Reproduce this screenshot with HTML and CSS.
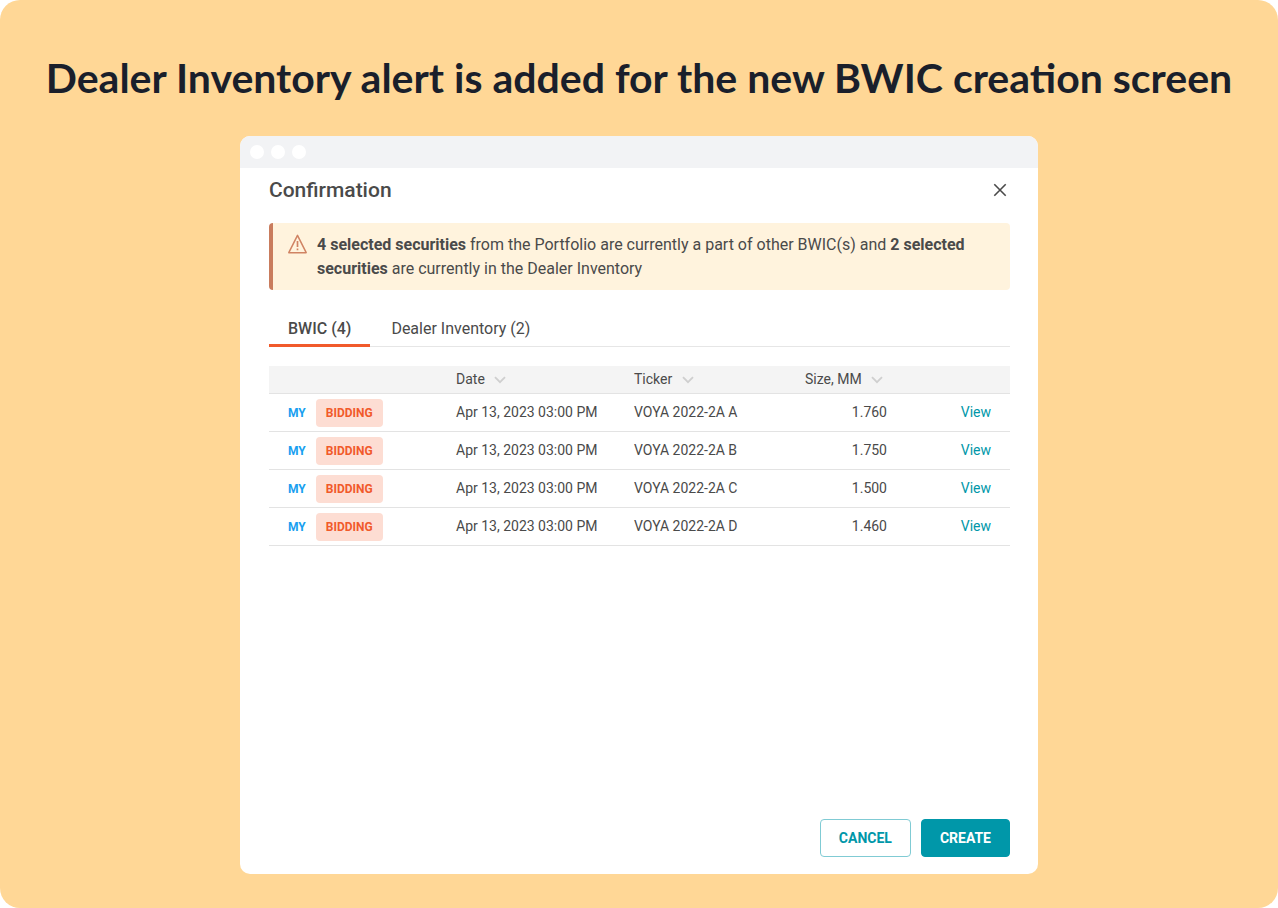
FILE: index.html
```html
<!DOCTYPE html>
<html lang="en">
  <head>
    <meta charset="UTF-8" />
    <meta name="viewport" content="width=device-width, initial-scale=1.0" />
    <title>Confirmation</title>
    <link rel="stylesheet" href="styles.css">
  </head>
  <body>
    <main class="page">
      <h1 class="page-title">Dealer Inventory alert is added for the new BWIC creation screen</h1>

      <section class="window">
        <div class="window-bar">
          <span class="dot"></span>
          <span class="dot"></span>
          <span class="dot"></span>
        </div>

        <div class="dialog">
          <header class="dialog-header">
            <h2>Confirmation</h2>
            <button class="close" aria-label="Close">
              <svg width="14" height="14" viewBox="0 0 14 14" fill="none" stroke="#4a4a4a" stroke-width="1.6">
                <path d="M1.3 1.3L12.7 12.7M12.7 1.3L1.3 12.7" />
              </svg>
            </button>
          </header>

          <div class="alert">
            <svg class="alert-icon" width="20" height="20" viewBox="0 0 20 20" fill="none" stroke="#d08363" stroke-width="1.5">
              <path d="M9.5 1.3L18.2 18.7H0.8L9.5 1.3Z" stroke-linejoin="round" />
              <path d="M9.5 7v6M9.5 14.4v1.8" stroke-width="1.7" />
            </svg>
            <p><b>4 selected securities</b> from the Portfolio are currently a part of other BWIC(s) and <b>2 selected securities</b> are currently in the Dealer Inventory</p>
          </div>

          <div class="tabs" role="tablist">
            <button class="tab active" role="tab" aria-selected="true">BWIC (4)</button>
            <button class="tab" role="tab" aria-selected="false">Dealer Inventory (2)</button>
          </div>

          <table class="securities">
            <colgroup>
              <col class="col-status">
              <col class="col-date">
              <col class="col-ticker">
              <col class="col-size">
              <col class="col-link">
            </colgroup>
            <thead>
              <tr>
                <th></th>
                <th>Date <svg class="sort" width="12" height="8" viewBox="0 0 12 8"><path d="M1 1.2L6 6.2L11 1.2" /></svg></th>
                <th>Ticker <svg class="sort" width="12" height="8" viewBox="0 0 12 8"><path d="M1 1.2L6 6.2L11 1.2" /></svg></th>
                <th>Size, MM <svg class="sort" width="12" height="8" viewBox="0 0 12 8"><path d="M1 1.2L6 6.2L11 1.2" /></svg></th>
                <th></th>
              </tr>
            </thead>
            <tbody>
              <tr>
                <td class="status-cell"><div class="status"><span class="my">MY</span><span class="badge">BIDDING</span></div></td>
                <td>Apr 13, 2023 03:00 PM</td>
                <td>VOYA 2022-2A A</td>
                <td class="right">1.760</td>
                <td class="right"><a href="#">View</a></td>
              </tr>
              <tr>
                <td class="status-cell"><div class="status"><span class="my">MY</span><span class="badge">BIDDING</span></div></td>
                <td>Apr 13, 2023 03:00 PM</td>
                <td>VOYA 2022-2A B</td>
                <td class="right">1.750</td>
                <td class="right"><a href="#">View</a></td>
              </tr>
              <tr>
                <td class="status-cell"><div class="status"><span class="my">MY</span><span class="badge">BIDDING</span></div></td>
                <td>Apr 13, 2023 03:00 PM</td>
                <td>VOYA 2022-2A C</td>
                <td class="right">1.500</td>
                <td class="right"><a href="#">View</a></td>
              </tr>
              <tr>
                <td class="status-cell"><div class="status"><span class="my">MY</span><span class="badge">BIDDING</span></div></td>
                <td>Apr 13, 2023 03:00 PM</td>
                <td>VOYA 2022-2A D</td>
                <td class="right">1.460</td>
                <td class="right"><a href="#">View</a></td>
              </tr>
            </tbody>
          </table>

          <footer class="actions">
            <button class="btn">CANCEL</button>
            <button class="btn btn-primary">CREATE</button>
          </footer>
        </div>
      </section>
    </main>
  </body>
</html>
```
FILE: styles.css
```css
* {
  box-sizing: border-box;
}
body {
  margin: 0;
  background: #fff;
  color: #4a4a4a;
  font-family: Roboto, sans-serif;
  font-size: 14px;
}
h1,
h2,
p {
  margin: 0;
}
button {
  font-family: inherit;
  color: inherit;
  border: none;
  background: none;
  cursor: pointer;
}

.page {
  min-height: 100vh;
  display: flex;
  flex-direction: column;
  align-items: center;
  padding: 48px 16px 34px;
  background: #ffd796;
  border-radius: 20px;
}
.page-title {
  margin-bottom: 28px;
  font-family: Lato, sans-serif;
  font-size: 41px;
  font-weight: 700;
  line-height: 60px;
  color: #1a1f2b;
  text-align: center;
}

.window {
  flex: 1;
  display: flex;
  flex-direction: column;
  width: 100%;
  max-width: 798px;
  background: #fff;
  border-radius: 10px;
  overflow: hidden;
}
.window-bar {
  display: flex;
  align-items: center;
  gap: 7px;
  height: 32px;
  padding: 0 10px;
  background: #f2f3f5;
}
.dot {
  width: 14px;
  height: 14px;
  border-radius: 50%;
  background: #fff;
}

.dialog {
  flex: 1;
  display: flex;
  flex-direction: column;
  padding: 8px 28px 17px 29px;
}
.dialog-header {
  display: flex;
  justify-content: space-between;
  align-items: center;
  height: 28px;
  margin-bottom: 19px;
}
.dialog-header h2 {
  font-size: 21px;
  font-weight: 500;
}
.close {
  display: flex;
  padding: 3px;
}

.alert {
  display: flex;
  gap: 9px;
  padding: 10px 19px 9px 15px;
  background: #fff3dd;
  border-left: 4px solid #c97c5d;
  border-radius: 4px;
  font-size: 16px;
  line-height: 24px;
}
.alert b {
  font-weight: 700;
}
.alert-icon {
  flex: none;
  margin-top: 1px;
}

.tabs {
  display: flex;
  gap: 2px;
  margin: 19px 0;
  border-bottom: 1px solid #e6e6e6;
}
.tab {
  height: 38px;
  margin-bottom: -1px;
  padding: 3px 19px 0;
  border-bottom: 3px solid transparent;
  font-size: 16px;
}
.tab.active {
  border-bottom-color: #f15a2b;
  font-weight: 500;
}

.securities {
  width: 100%;
  table-layout: fixed;
  border-collapse: separate;
  border-spacing: 0;
}
.col-status {
  width: 168px;
}
.col-date {
  width: 178px;
}
.col-ticker {
  width: 171px;
}
.col-size {
  width: 120px;
}
.securities th,
.securities td {
  padding: 0 19px 2px;
  border-bottom: 1px solid #e3e3e3;
  text-align: left;
  white-space: nowrap;
}
.securities th {
  height: 28px;
  background: #f4f4f4;
  font-weight: 400;
}
.securities td {
  height: 38px;
}
.securities .status-cell {
  padding-bottom: 0;
}
.securities .right {
  text-align: right;
}
.securities a {
  color: #0097a9;
  text-decoration: none;
}
.sort {
  margin-left: 6px;
  vertical-align: 0;
  fill: none;
  stroke: #cfcfcf;
  stroke-width: 1.8;
}
.status {
  display: flex;
  align-items: center;
  gap: 10px;
  font-size: 12px;
  font-weight: 700;
}
.my {
  color: #1a9ff0;
}
.badge {
  padding: 0 10px;
  border-radius: 4px;
  background: #fdddd3;
  color: #f15a2b;
  line-height: 28px;
}

.actions {
  display: flex;
  justify-content: flex-end;
  gap: 10px;
  margin-top: auto;
}
.btn {
  height: 38px;
  padding: 0 18px;
  border: 1px solid #80cbd4;
  border-radius: 4px;
  color: #0097a9;
  font-size: 14px;
  font-weight: 700;
}
.btn-primary {
  border-color: #0097a9;
  background: #0097a9;
  color: #fff;
}
```
